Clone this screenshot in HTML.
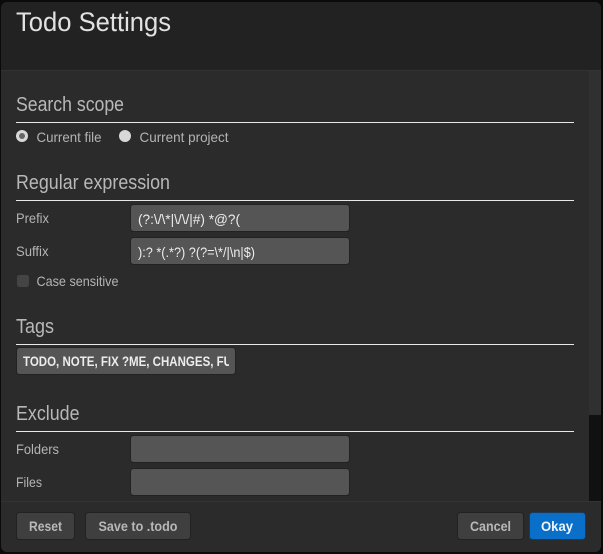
<!DOCTYPE html>
<html><head><meta charset="utf-8"><style>
html,body{margin:0;padding:0;width:603px;height:554px;overflow:hidden;background:#0a0a0a}
svg{display:block}
text{font-family:"Liberation Sans",sans-serif;}
</style></head><body>
<svg width="603" height="554" viewBox="0 0 603 554" xmlns="http://www.w3.org/2000/svg">
<defs><clipPath id="c"><rect x="17" y="348" width="212" height="26"/></clipPath></defs>
<rect width="603" height="554" fill="#0a0a0a"/>
<rect x="1" y="2" width="600" height="550" rx="6" fill="#2b2b2b"/>
<path d="M1 70V8a6 6 0 0 1 6-6H595a6 6 0 0 1 6 6V70Z" fill="#222"/>
<rect x="1" y="70" width="600" height="1" fill="#333"/>
<rect x="589" y="71" width="12" height="344" fill="#303030"/>
<rect x="589" y="415" width="12" height="86" fill="#111"/>
<rect x="1" y="501" width="600" height="1" fill="#333"/>

<text x="16" y="31" font-size="27" fill="#e2e2e2" textLength="155" lengthAdjust="spacingAndGlyphs">Todo Settings</text>
<text x="16" y="111" font-size="20" fill="#b8b8b8" textLength="108" lengthAdjust="spacingAndGlyphs">Search scope</text>
<rect x="16" y="122" width="558" height="1" fill="#e8e8e8"/>
<circle cx="22" cy="136" r="6" fill="#d8d8d8"/><circle cx="22" cy="136" r="3" fill="#666"/>
<circle cx="125" cy="136" r="6" fill="#d8d8d8"/>
<text x="36.5" y="142" font-size="14" fill="#b4b4b4" textLength="65" lengthAdjust="spacingAndGlyphs">Current file</text>
<text x="139.5" y="142" font-size="14" fill="#b4b4b4" textLength="89" lengthAdjust="spacingAndGlyphs">Current project</text>

<text x="16" y="189" font-size="20" fill="#b8b8b8" textLength="154" lengthAdjust="spacingAndGlyphs">Regular expression</text>
<rect x="16" y="200" width="558" height="1" fill="#e8e8e8"/>
<text x="16" y="223" font-size="14" fill="#b4b4b4" textLength="33" lengthAdjust="spacingAndGlyphs">Prefix</text>
<rect x="130.5" y="204.5" width="219" height="27" rx="3" fill="#555" stroke="#222"/>
<text x="138" y="224" font-size="14" fill="#ededed" textLength="102" lengthAdjust="spacingAndGlyphs">(?:\/\*|\/\/|#) *@?(</text>
<text x="16" y="256" font-size="14" fill="#b4b4b4" textLength="32.5" lengthAdjust="spacingAndGlyphs">Suffix</text>
<rect x="130.5" y="237.5" width="219" height="27" rx="3" fill="#555" stroke="#222"/>
<text x="138" y="257" font-size="14" fill="#ededed" textLength="117" lengthAdjust="spacingAndGlyphs">):? *(.*?) ?(?=\*/|\n|$)</text>
<rect x="17" y="275" width="12" height="12" rx="2.5" fill="#444"/>
<text x="36.5" y="286" font-size="14" fill="#b4b4b4" textLength="82" lengthAdjust="spacingAndGlyphs">Case sensitive</text>

<text x="16" y="333" font-size="20" fill="#b8b8b8" textLength="38" lengthAdjust="spacingAndGlyphs">Tags</text>
<rect x="16" y="344" width="558" height="1" fill="#e8e8e8"/>
<rect x="16.5" y="347.5" width="219" height="27" rx="3" fill="#555" stroke="#222"/>
<g clip-path="url(#c)"><text x="23" y="366" font-size="13.5" font-weight="bold" fill="#ececec" textLength="209" lengthAdjust="spacingAndGlyphs">TODO, NOTE, FIX ?ME, CHANGES, FU</text></g>

<text x="16" y="420" font-size="20" fill="#b8b8b8" textLength="63.5" lengthAdjust="spacingAndGlyphs">Exclude</text>
<rect x="16" y="431" width="558" height="1" fill="#e8e8e8"/>
<text x="16" y="454" font-size="14" fill="#b4b4b4" textLength="43" lengthAdjust="spacingAndGlyphs">Folders</text>
<rect x="130.5" y="435.5" width="219" height="27" rx="3" fill="#555" stroke="#222"/>
<text x="16" y="487" font-size="14" fill="#b4b4b4" textLength="26" lengthAdjust="spacingAndGlyphs">Files</text>
<rect x="130.5" y="468.5" width="219" height="27" rx="3" fill="#555" stroke="#222"/>

<rect x="16.5" y="512.5" width="58" height="27" rx="3" fill="#3f3f3f" stroke="#222"/>
<text x="29" y="531" font-size="14" font-weight="bold" fill="#b8b8b8" textLength="33" lengthAdjust="spacingAndGlyphs">Reset</text>
<rect x="85.5" y="512.5" width="105" height="27" rx="3" fill="#3f3f3f" stroke="#222"/>
<text x="98.5" y="531" font-size="14" font-weight="bold" fill="#b8b8b8" textLength="79" lengthAdjust="spacingAndGlyphs">Save to .todo</text>
<rect x="457.5" y="512.5" width="66" height="27" rx="3" fill="#3f3f3f" stroke="#222"/>
<text x="470" y="531" font-size="14" font-weight="bold" fill="#b8b8b8" textLength="41" lengthAdjust="spacingAndGlyphs">Cancel</text>
<rect x="529.5" y="512.5" width="56" height="27" rx="3" fill="#0a6fc8" stroke="#1c3a55"/>
<text x="541" y="531" font-size="14" font-weight="bold" fill="#f0f4f8" textLength="32" lengthAdjust="spacingAndGlyphs">Okay</text>
</svg>
</body></html>
